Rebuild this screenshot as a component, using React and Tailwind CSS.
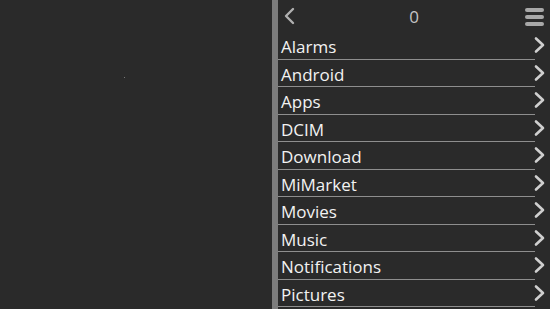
import React from 'react';

const folders = ['Alarms', 'Android', 'Apps', 'DCIM', 'Download', 'MiMarket', 'Movies', 'Music', 'Notifications', 'Pictures'];

const ChevronRight = () => (
  <svg width="12" height="18" viewBox="0 0 12 18" className="shrink-0">
    <path d="M2 2.5 L9 9 L2 15.5" fill="none" stroke="#cfcfcf" strokeWidth="2.6" strokeLinecap="round" strokeLinejoin="round" />
  </svg>
);

const App = () => {
  return (
    <div
      className="w-[550px] h-[309px] overflow-hidden flex bg-[#2a2a2a] text-white"
      style={{ fontFamily: '"Open Sans", "Noto Sans", sans-serif' }}
    >
      {/* empty left pane */}
      <div className="w-[272px] h-full relative">
        <div className="absolute left-[124px] top-[77px] w-px h-px bg-[#777]" />
      </div>

      {/* splitter */}
      <div className="w-[6px] h-full bg-[#7c7c7c]" />

      {/* file list */}
      <div className="flex-1 flex flex-col">
        <div className="h-[32px] flex items-center justify-between pl-[5px] pr-[6px]">
          <svg width="12" height="18" viewBox="0 0 12 18">
            <path d="M10 2 L3 9 L10 16" fill="none" stroke="#b0b0b0" strokeWidth="2.4" strokeLinecap="round" strokeLinejoin="round" />
          </svg>
          <span className="text-[17px] leading-none text-[#c4c4c4] ml-[8px]">0</span>
          <div className="flex flex-col gap-[3px] mt-[1px]">
            <div className="w-[19px] h-[4px] rounded-full bg-[#a8a8a8]" />
            <div className="w-[19px] h-[4px] rounded-full bg-[#a8a8a8]" />
            <div className="w-[19px] h-[4px] rounded-full bg-[#a8a8a8]" />
          </div>
        </div>
        {folders.map((name) => (
          <div key={name} className="h-[27.5px] shrink-0 flex flex-col">
            <div className="flex-1 flex items-center justify-between pl-[3px] pr-[4px]">
              <span className="text-[17px] leading-none pt-[3px] text-[#f2f2f2]">{name}</span>
              <ChevronRight />
            </div>
            <div className="h-px bg-[#8e8e8e] mr-[15px]" />
          </div>
        ))}
      </div>
    </div>
  );
};

export default App;
